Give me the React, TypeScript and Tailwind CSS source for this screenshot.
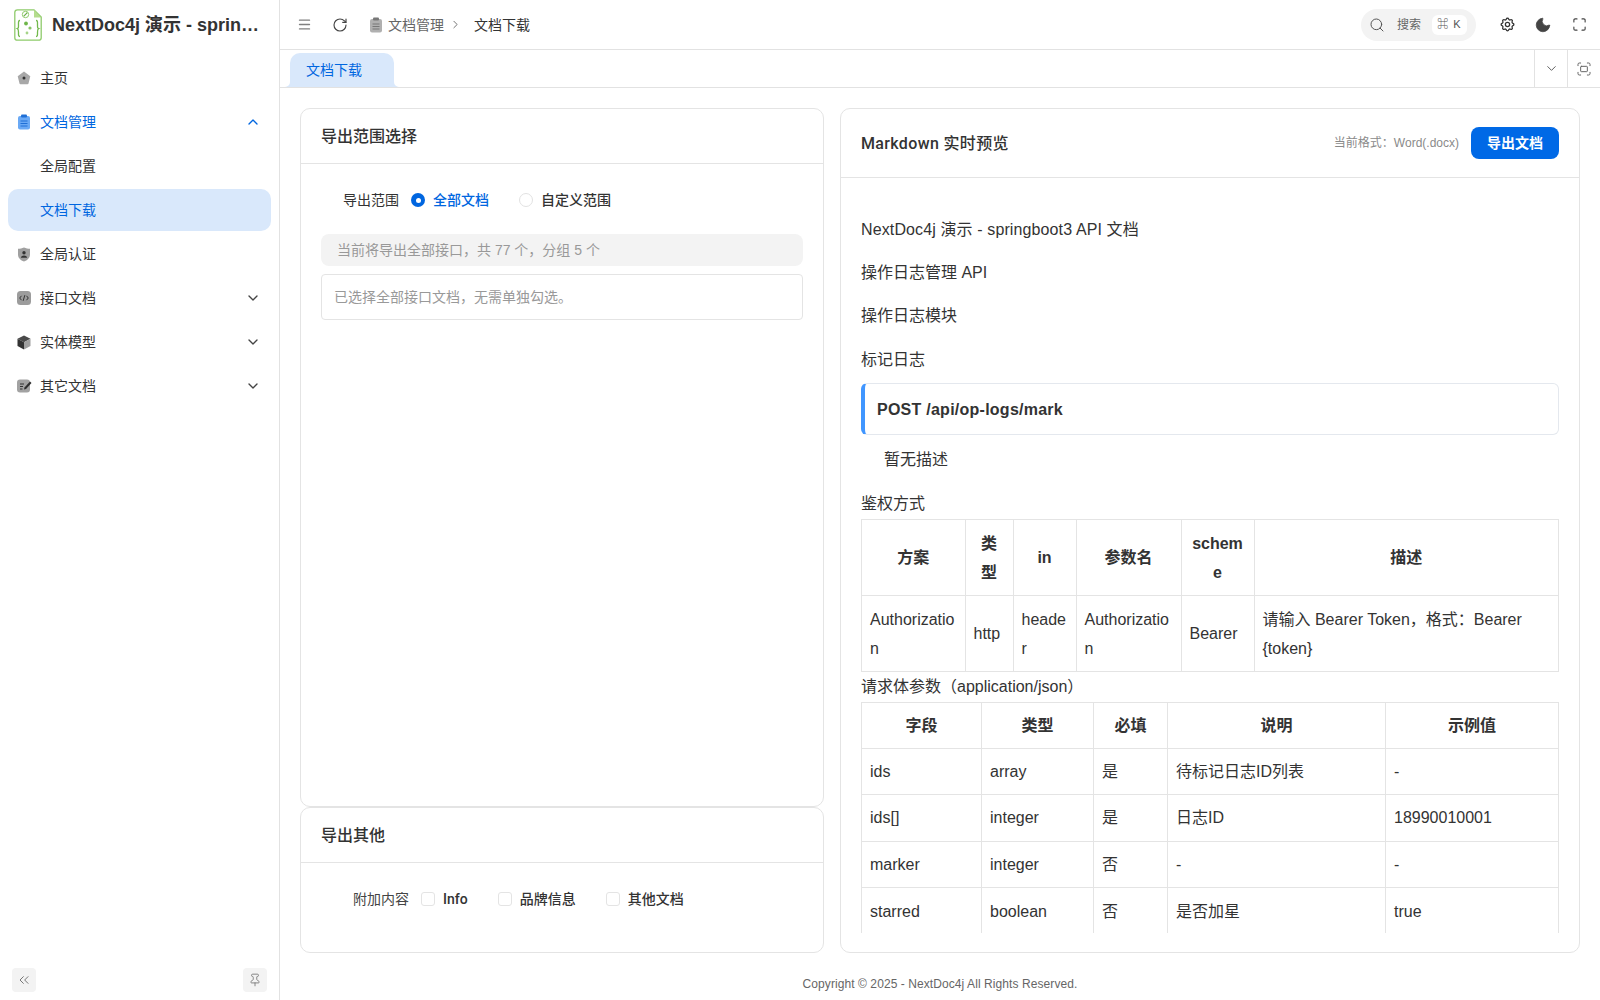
import { ChevronDown, ChevronRight, ChevronUp, ChevronsLeft, Fullscreen, Maximize, Menu, Moon, Pin, RotateCw, Search } from "lucide-react";
import { TbSettings } from "react-icons/tb";
import type { ReactNode } from "react";

const font = { fontFamily: '"Liberation Sans", "Noto Sans CJK SC", sans-serif' };

function Logo() {
  return (
    <svg width="28" height="32" viewBox="0 0 28 32" fill="none" className="shrink-0">
      <path d="M3.500 .8H20L27.200 8v20.700a2.500 2.500 0 0 1-2.500 2.500H3.300a2.500 2.500 0 0 1-2.500-2.500V3.500A2.700 2.700 0 0 1 3.500 .8z" stroke="#8fcb6b" strokeWidth="1.300" fill="#fff" />
      <path d="M20 .8v7.700h7.200z" fill="#b5dc8e" />
      <circle cx="11.500" cy="5.500" r="3.200" stroke="#8fcb6b" strokeWidth="1" />
      <path d="M9.800 7.200l3.500-3.500" stroke="#6aae46" strokeWidth="1.200" />
      <path d="M6 11.500c-1.800 0-1.500 1.500-1.500 4.500s0 3-1.300 3.500c1.300.5 1.300 1 1.300 3.500s-.3 4.500 1.500 4.500" stroke="#72b94c" strokeWidth="1.300" />
      <path d="M22 11.500c1.800 0 1.500 1.500 1.500 4.500s0 3 1.300 3.500c-1.300.5-1.300 1-1.300 3.500s.3 4.500-1.500 4.500" stroke="#72b94c" strokeWidth="1.300" />
      <circle cx="12" cy="14.500" r="1.900" fill="#6fb64a" />
      <circle cx="16" cy="19" r="1.600" fill="#88c465" />
      <circle cx="13" cy="24" r="1.400" fill="#a5d488" />
    </svg>
  );
}

function HomeIcon() {
  return (
    <svg width="14" height="14" viewBox="0 0 14 14">
      <path d="M7 .5l6.300 4.700-1.800 7.300a1 1 0 0 1-1 .8H3.500a1 1 0 0 1-1-.8L.7 5.200z" fill="#a8a8a8" />
      <circle cx="7" cy="7" r="1.500" fill="#333" />
    </svg>
  );
}

function ClipboardIcon({ color, line }: { color: string; line: string }) {
  return (
    <svg width="14" height="16" viewBox="0 0 14 16">
      <rect x="1" y="2" width="12" height="13.500" rx="2" fill={color} />
      <rect x="4" y=".5" width="6" height="3" rx="1" fill={line} />
      <path d="M3.500 7h7M3.500 9.500h7M3.500 12h7" stroke={line} strokeWidth="1" />
    </svg>
  );
}

function ShieldIcon() {
  return (
    <svg width="14" height="15" viewBox="0 0 14 15">
      <path d="M7 .5c2 1 4 1.200 6 1.200v5.800c0 3.500-2.700 5.800-6 7-3.300-1.200-6-3.500-6-7V1.700c2 0 4-.2 6-1.200z" fill="#a0a0a0" />
      <circle cx="7" cy="5.800" r="1.700" fill="#333" />
      <path d="M3.800 10.800c.4-1.700 1.700-2.400 3.200-2.400s2.800.7 3.200 2.400z" fill="#333" />
    </svg>
  );
}

function CodeIcon() {
  return (
    <svg width="14" height="14" viewBox="0 0 14 14" fill="none">
      <rect width="14" height="14" rx="3.500" fill="#9c9c9c" />
      <path d="M4.500 4.800L2.700 7l1.800 2.200M9.500 4.800L11.300 7 9.500 9.200M7.800 4.200L6.200 9.800" stroke="#333" strokeWidth="1" />
    </svg>
  );
}

function CubeIcon() {
  return (
    <svg width="14" height="15" viewBox="0 0 14 15">
      <path d="M7 .5l6.500 3.300L7 7.300.5 3.800z" fill="#4a4a4a" />
      <path d="M.5 3.800L7 7.300v7.200L.5 11z" fill="#333" />
      <path d="M13.500 3.800L7 7.300v7.200l6.500-3.500z" fill="#a0a0a0" />
    </svg>
  );
}

function EditIcon() {
  return (
    <svg width="15" height="14" viewBox="0 0 15 14" fill="none">
      <rect y=".5" width="13" height="13" rx="3" fill="#a2a2a2" />
      <path d="M3 5h4M3 7.500h3M3 10h2.500" stroke="#333" strokeWidth="1" />
      <path d="M7 10.500l.5-2 5.500-6 1.500 1.500-5.500 6z" fill="#2e2e2e" />
    </svg>
  );
}

function NavItem({ icon, label, open }: { icon: ReactNode; label: string; open?: boolean }) {
  return (
    <div className={`flex h-[42px] items-center pl-[17px] pr-[18px] ${open ? "text-[#0066e0]" : "text-[#333]"}`}>
      <span className="flex w-[23px] shrink-0 items-center">{icon}</span>
      <span className="flex-1 text-sm">{label}</span>
      {open === true && <ChevronUp size={16} strokeWidth={2} className="text-[#0066e0]" />}
      {open === false && <ChevronDown size={16} strokeWidth={2} className="text-[#444]" />}
    </div>
  );
}

function Sidebar() {
  return (
    <aside className="flex h-full w-[280px] shrink-0 flex-col border-r border-[#e2e2e2] bg-white">
      <div className="flex h-[50px] items-center gap-[10px] pl-[14px] pr-[17px]">
        <Logo />
        <span className="truncate text-[18px] font-bold text-[#333]">NextDoc4j 演示 - springboot3 API 文档</span>
      </div>
      <nav className="flex flex-1 flex-col gap-[2px] pt-[7px]">
        <NavItem icon={<HomeIcon />} label="主页" />
        <NavItem icon={<ClipboardIcon color="#6aa9f5" line="#1f6fd6" />} label="文档管理" open={true} />
        <div className="flex h-[42px] items-center pl-[40px] text-sm text-[#333]">全局配置</div>
        <div className="mx-[8px] flex h-[42px] items-center rounded-[10px] bg-[#d9e8fb] pl-[32px] text-sm text-[#0066e0]">文档下载</div>
        <NavItem icon={<ShieldIcon />} label="全局认证" />
        <NavItem icon={<CodeIcon />} label="接口文档" open={false} />
        <NavItem icon={<CubeIcon />} label="实体模型" open={false} />
        <NavItem icon={<EditIcon />} label="其它文档" open={false} />
      </nav>
      <div className="flex items-center justify-between pb-[8px] pl-[12px] pr-[12px]">
        <div className="flex h-[24px] w-[24px] items-center justify-center rounded bg-[#f3f3f3] text-[#777]"><ChevronsLeft size={16} strokeWidth={1.500} /></div>
        <div className="flex h-[24px] w-[24px] items-center justify-center rounded bg-[#f3f3f3] text-[#777]"><Pin size={14} strokeWidth={1.500} /></div>
      </div>
    </aside>
  );
}

function Header() {
  return (
    <header className="flex h-[50px] shrink-0 items-center border-b border-[#e2e2e2] pl-[17px] pr-[13px]">
      <Menu size={15} strokeWidth={2.200} className="text-[#808080]" />
      <RotateCw size={16} strokeWidth={1.700} className="ml-[20px] text-[#444]" />
      <span className="ml-[21px] flex items-center text-sm text-[#666]">
        <ClipboardIcon color="#b0b0b0" line="#777" />
        <span className="ml-[5px]">文档管理</span>
      </span>
      <ChevronRight size={13} strokeWidth={1.500} className="ml-[5px] text-[#555]" />
      <span className="ml-[12px] text-sm text-[#333]">文档下载</span>
      <div className="ml-auto flex h-[32px] w-[115px] items-center rounded-full bg-[#f3f3f3] pl-[8px]">
        <Search size={16} strokeWidth={1.500} className="text-[#555]" />
        <span className="ml-[12px] text-xs text-[#666]">搜索</span>
        <span className="ml-[11px] flex h-[20px] w-[35px] items-center justify-center rounded-[6px] bg-white text-[11px] tracking-[1px] text-[#555]">⌘ K</span>
      </div>
      <TbSettings size={17} strokeWidth={1.800} className="ml-[23px] text-[#333]" />
      <Moon size={18} fill="#444" strokeWidth={1} className="ml-[18px] text-[#444]" />
      <Maximize size={15} strokeWidth={1.800} className="ml-[20px] text-[#444]" />
    </header>
  );
}

function TabBar() {
  return (
    <div className="flex h-[38px] shrink-0 items-end justify-between border-b border-[#e2e2e2] pl-[10px]">
      <div className="relative flex h-[34px] w-[104px] items-center rounded-t-[10px] bg-[#d9e8fb] pl-[16px] text-sm text-[#0066e0]">
        文档下载
        <svg width="5" height="5" viewBox="0 0 5 5" className="absolute -left-[5px] bottom-0"><path d="M5 0v5H0a5 5 0 0 0 5-5z" fill="#d9e8fb" /></svg>
        <svg width="5" height="5" viewBox="0 0 5 5" className="absolute -right-[5px] bottom-0"><path d="M0 0v5h5a5 5 0 0 1-5-5z" fill="#d9e8fb" /></svg>
      </div>
      <div className="flex h-full">
        <div className="flex w-[33px] items-center justify-center border-l border-[#e2e2e2] text-[#555]"><ChevronDown size={15} strokeWidth={1.500} /></div>
        <div className="flex w-[33px] items-center justify-center border-l border-[#e2e2e2] text-[#666]"><Fullscreen size={16} strokeWidth={1.500} /></div>
      </div>
    </div>
  );
}

function Card({ title, className, children }: { title: string; className: string; children: ReactNode }) {
  return (
    <section className={`flex flex-col rounded-[10px] border border-[#e4e4e4] bg-white ${className}`}>
      <div className="flex h-[55px] shrink-0 items-center border-b border-[#e4e4e4] px-[20px] pt-[1px] text-base font-medium text-[#333]">{title}</div>
      {children}
    </section>
  );
}

function Check({ label, className }: { label: string; className: string }) {
  return (
    <span className={`flex items-center font-['Roboto','Noto_Sans_CJK_SC',sans-serif] text-sm font-medium text-[#333] ${className}`}>
      <span className="mr-[8px] h-[14px] w-[14px] rounded-[3px] border border-[#e4e4e4] bg-white" />
      {label}
    </span>
  );
}

function ExportPanel() {
  return (
    <div className="flex w-[524px] shrink-0 flex-col">
      <Card title="导出范围选择" className="min-h-0 flex-1">
        <div className="px-[20px] pt-[24px]">
          <div className="flex h-[24px] items-center pl-[22px] text-sm text-[#333]">
            <span>导出范围</span>
            <span className="ml-[12px] flex h-[14px] w-[14px] items-center justify-center rounded-full bg-[#0066e0]"><span className="h-[5px] w-[5px] rounded-full bg-white" /></span>
            <span className="ml-[8px] font-medium text-[#0066e0]">全部文档</span>
            <span className="ml-[30px] h-[14px] w-[14px] rounded-full border border-[#e2e2e2]" />
            <span className="ml-[8px] font-medium">自定义范围</span>
          </div>
          <div className="mt-[22px] flex h-[32px] items-center rounded-[8px] bg-[#f3f3f3] pl-[16px] text-sm text-[#999]">当前将导出全部接口，共 77 个，分组 5 个</div>
          <div className="mt-[8px] flex h-[46px] items-center rounded-[4px] border border-[#e4e4e4] pl-[12px] text-sm text-[#999]">已选择全部接口文档，无需单独勾选。</div>
        </div>
      </Card>
      <Card title="导出其他" className="h-[146px] shrink-0">
        <div className="flex h-[72px] items-center pl-[52px] text-sm text-[#333]">
          <span className="text-[#444]">附加内容</span>
          <Check label="Info" className="ml-[12px]" />
          <Check label="品牌信息" className="ml-[30px]" />
          <Check label="其他文档" className="ml-[30px]" />
        </div>
      </Card>
    </div>
  );
}

function Th({ tall, children }: { tall?: boolean; children: ReactNode }) {
  return <th className={`border border-[#e4e4e4] px-[8px] text-center font-bold wrap-break-word ${tall ? "py-[8.800px]" : "py-[7.800px]"}`}>{children}</th>;
}

function Td({ children }: { children: ReactNode }) {
  return <td className="border border-[#e4e4e4] px-[8px] py-[8.300px] font-normal wrap-break-word">{children}</td>;
}

const authHead = ["方案", "类型", "in", "参数名", "scheme", "描述"];
const authRow = ["Authorization", "http", "header", "Authorization", "Bearer", "请输入 Bearer Token，格式：Bearer {token}"];
const bodyHead = ["字段", "类型", "必填", "说明", "示例值"];
const bodyRows = [
  ["ids", "array", "是", "待标记日志ID列表", "-"],
  ["ids[]", "integer", "是", "日志ID", "18990010001"],
  ["marker", "integer", "否", "-", "-"],
  ["starred", "boolean", "否", "是否加星", "true"],
];

function Preview() {
  return (
    <section className="flex min-w-0 flex-1 flex-col rounded-[10px] border border-[#e4e4e4] bg-white">
      <div className="flex h-[69px] shrink-0 items-center border-b border-[#e4e4e4] px-[20px]">
        <span className="pt-[1px] font-['Roboto','Noto_Sans_CJK_SC',sans-serif] text-base font-medium tracking-[0.35px] text-[#333]">Markdown 实时预览</span>
        <span className="ml-auto text-xs text-[#8a8a8a]">当前格式：Word(.docx)</span>
        <span className="ml-[12px] flex h-[32px] w-[88px] items-center justify-center rounded-[8px] bg-[#0069e6] text-sm font-semibold text-white">导出文档</span>
      </div>
      <div className="mx-[20px] mt-[19px] mb-[19px] min-h-0 flex-1 overflow-hidden text-base leading-[29px] text-[#333]">
        <p className="mt-[18px] mb-[14.200px] tracking-[0.12px]">NextDoc4j 演示 - springboot3 API 文档</p>
        <p className="mb-[14.200px]">操作日志管理 API</p>
        <p className="mb-[14.200px]">操作日志模块</p>
        <p className="mb-[9px]">标记日志</p>
        <div className="flex h-[52px] items-center rounded-[6px] border border-l-[4px] border-[#e4e8ee] border-l-[#4096ff] pl-[12px] pt-[2px] font-bold tracking-[0.25px]">POST /api/op-logs/mark</div>
        <p className="mt-[10px] mb-[15.200px] pl-[23px]">暂无描述</p>
        <p className="mb-[1px]">鉴权方式</p>
        <table className="w-full table-fixed border-collapse">
          <colgroup>
            <col className="w-[103.500px]" />
            <col className="w-[48px]" />
            <col className="w-[63px]" />
            <col className="w-[105px]" />
            <col className="w-[73px]" />
            <col />
          </colgroup>
          <thead><tr>{authHead.map((h) => <Th key={h} tall>{h}</Th>)}</tr></thead>
          <tbody><tr>{authRow.map((c, i) => <Td key={i}>{c}</Td>)}</tr></tbody>
        </table>
        <p className="mb-[1px]">请求体参数（application/json）</p>
        <table className="w-full table-fixed border-collapse">
          <colgroup>
            <col className="w-[120px]" />
            <col className="w-[112px]" />
            <col className="w-[74px]" />
            <col className="w-[218px]" />
            <col />
          </colgroup>
          <thead><tr>{bodyHead.map((h) => <Th key={h}>{h}</Th>)}</tr></thead>
          <tbody>{bodyRows.map((r) => <tr key={r[0]}>{r.map((c, i) => <Td key={i}>{c}</Td>)}</tr>)}</tbody>
        </table>
      </div>
    </section>
  );
}

export default function App() {
  return (
    <div className="flex h-screen w-full overflow-hidden bg-white" style={font}>
      <Sidebar />
      <main className="flex min-w-0 flex-1 flex-col">
        <Header />
        <TabBar />
        <div className="flex min-h-0 flex-1 gap-[16px] px-[20px] pt-[20px]">
          <ExportPanel />
          <Preview />
        </div>
        <footer className="flex h-[47px] shrink-0 items-center justify-center pt-[15px] text-xs tracking-[0.08px] text-[#666]">Copyright © 2025 - NextDoc4j All Rights Reserved.</footer>
      </main>
    </div>
  );
}
